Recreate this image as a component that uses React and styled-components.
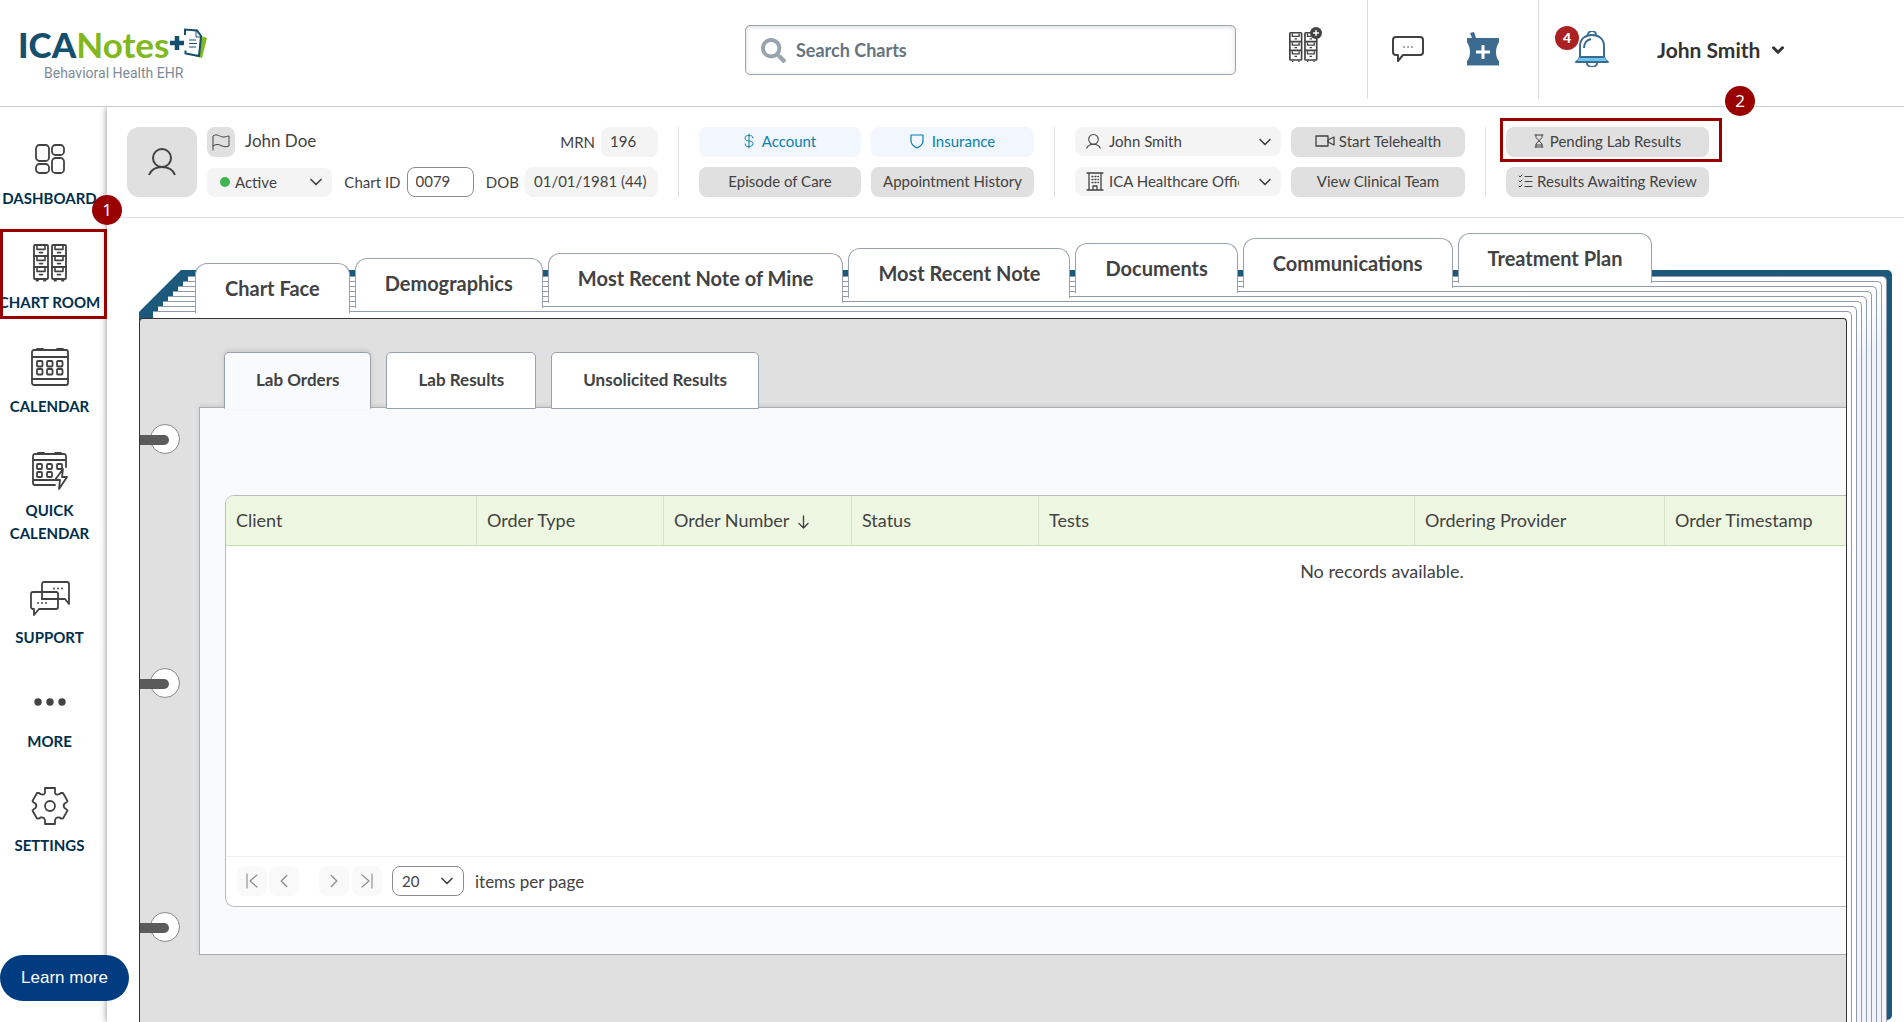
import * as React from 'react';
import styled, { createGlobalStyle } from 'styled-components';
import { FaSearch } from 'react-icons/fa';
import { ChevronDown, ChevronLeft, ChevronRight } from 'lucide-react';

const GlobalStyle = createGlobalStyle`
    * {
        box-sizing: border-box;
    }
    body {
        margin: 0;
        background: #fff;
        color: #424242;
        font-family: Lato, "Open Sans", sans-serif;
        font-size: 15px;
    }
    button, input, select {
        margin: 0;
        color: inherit;
        font-family: inherit;
        font-size: 15px;
    }
`;

/* ---------- icons ---------- */

const Line = ({ w, h, stroke = 2, children }) => (
    <svg width={w} height={h} viewBox={`0 0 ${w} ${h}`} fill="none" stroke="currentColor"
        strokeWidth={stroke} strokeLinejoin="round" strokeLinecap="round" aria-hidden="true">
        {children}
    </svg>
);

const cabinet = (x) => (
    <g key={x}>
        <rect x={x} y="1" width="14" height="34" rx="1" />
        <path d={`M${x} 12h14M${x} 23h14`} />
        {[1, 12, 23].map((y) => (
            <path key={y} strokeWidth="1.6" d={`M${x + 3} ${y + 1}v3.4h8v-3.4M${x + 5.5} ${y + 7.6}h3`} />
        ))}
        <path d={`M${x + 2.5} 36.5h1.5M${x + 10} 36.5h1.5`} />
    </g>
);

const CabinetIcon = () => <Line w={34} h={38} stroke={1.8}>{[1, 19].map(cabinet)}</Line>;

const AddChartIcon = () => (
    <svg width="34" height="36" viewBox="0 0 34 36" fill="none" stroke="currentColor" strokeWidth="2" aria-hidden="true">
        <g transform="translate(0 5) scale(.84 .8)">{[1, 19].map(cabinet)}</g>
        <circle cx="27" cy="6" r="6" fill="#424242" stroke="none" />
        <path d="M27 3v6M24 6h6" stroke="#fff" strokeWidth="1.4" />
    </svg>
);

const DashboardIcon = () => (
    <Line w={30} h={30} stroke={1.8}>
        <rect x="1" y="1" width="13" height="16" rx="3.5" />
        <rect x="17" y="1" width="12" height="10" rx="3.5" />
        <rect x="1" y="20" width="13" height="9" rx="3.5" />
        <rect x="17" y="14" width="12" height="15" rx="3.5" />
    </Line>
);

const days = [[6, 13], [16, 13], [26, 13], [6, 21], [16, 21], [26, 21]];

const CalendarIcon = () => (
    <Line w={38} h={38} stroke={1.8}>
        <rect x="1" y="2" width="36" height="35" rx="2" />
        <path d="M1 9h36M1 31h36M6 1h6M26 1h6" />
        {days.map(([x, y]) => <rect key={`${x}-${y}`} x={x} y={y} width="5.5" height="5.5" rx="1" />)}
    </Line>
);

const QuickCalendarIcon = () => (
    <Line w={36} h={38} stroke={1.8}>
        <path d="M34 15V4a2 2 0 0 0-2-2H3a2 2 0 0 0-2 2v27a2 2 0 0 0 2 2h20M1 8h33M1 28h21M6 1h6M23 1h6" />
        {days.slice(0, 5).map(([x, y]) => (
            <rect key={`${x}-${y}`} x={x - 1} y={y - 1} width="5" height="5" rx="1" />
        ))}
        <path d="M31 17l-8 11h5l-1 9 8-12h-5z" fill="#fff" />
    </Line>
);

const SupportIcon = () => (
    <Line w={40} h={36} stroke={1.8}>
        <path d="M12 12V4a2 2 0 0 1 2-2h23a2 2 0 0 1 2 2v20l-4-5h-6M12 12v7" />
        <path d="M3 12h23a2 2 0 0 1 2 2v13a2 2 0 0 1-2 2H9l-5 6v-6H3a2 2 0 0 1-2-2V14a2 2 0 0 1 2-2zM12 19h16" />
        <path d="M24 8.500h.1M28 8.500h.1M32 8.500h.1M8 23h.1M12 23h.1M16 23h.1" />
    </Line>
);

const MoreIcon = () => (
    <svg width="32" height="8" viewBox="0 0 32 8" fill="currentColor" aria-hidden="true">
        <circle cx="4" cy="4" r="3.700" /><circle cx="16" cy="4" r="3.700" /><circle cx="28" cy="4" r="3.700" />
    </svg>
);

const SettingsIcon = () => (
    <Line w={38} h={38} stroke={1.8}>
        <path d="M14 1h10v4q0 3 3 2.500q2-.5 3-1.500l2 0 4.500 8q-.5 1.500-2.500 2.200-2.500 2-.5 4.800 2 1 3 2.500l-4.500 8q-2 .5-4-1.200-4-.3-4 3.700v3H14v-3q0-4-4-3.700-2 1.700-4 1.200l-4.500-8q1-1.500 3-2.500 2-2.800-.5-4.800-2-.7-2.500-2.200L6 6h2q1 1 3 1.500 3 .5 3-2.500z" />
        <circle cx="19" cy="19" r="5" />
    </Line>
);

const ChatIcon = () => (
    <Line w={32} h={26}>
        <path d="M4 1h24a3 3 0 0 1 3 3v12a3 3 0 0 1-3 3H11l-5 6v-6H4a3 3 0 0 1-3-3V4a3 3 0 0 1 3-3z" />
        <path d="M12 11h.1M16 11h.1M20 11h.1" strokeWidth="1.500" />
    </Line>
);

const PharmacyIcon = () => (
    <svg width="32" height="34" viewBox="0 0 32 34" aria-hidden="true">
        <path fill="#3d6a8f" d="M3 1l4-1 2 6h23v4c-1 2-3 5-3 10s2 8 3 9v5H0v-5c1-1 3-4 3-9S1 12 0 10V6h5z" />
        <path stroke="#fff" strokeWidth="3" d="M16 13v14M9 20h14" />
        <path stroke="#a7bccd" d="M0 33.500h32" />
    </svg>
);

const BellIcon = () => (
    <svg width="36" height="36" viewBox="0 0 36 36" fill="none" stroke="#3d6a8f" strokeWidth="2" strokeLinejoin="round" aria-hidden="true">
        <path d="M14 4a4 4 0 0 1 8 0M13 32a5 4 0 0 0 10 0" />
        <path d="M2 31c3-2 4-3 4-6V15C6 8 11 4 18 4s12 4 12 11v10c0 3 1 4 4 6z" fill="#fff" />
        <path d="M6 26h24l3 4H3z" fill="#6cc6f0" stroke="none" />
        <path d="M6 26h24M2 31h32M10 17c0-5 3-8 7-9" />
    </svg>
);

const PersonIcon = ({ size = 28 }) => (
    <svg width={size} height={size} viewBox="0 0 28 28" fill="none" stroke="currentColor" strokeWidth="2" aria-hidden="true">
        <circle cx="14" cy="10" r="9" /><path d="M1 27c2-5 7-8 13-8s11 3 13 8" />
    </svg>
);

const FlagIcon = () => (
    <Line w={18} h={18} stroke={1}>
        <path d="M1 17V3c4-3 7 1 10 1 3 .2 4-1 6-1v10c-3 1-5 1-8-.5S4 11 1 13" />
    </Line>
);

const DollarIcon = () => (
    <Line w={10} h={16} stroke={1}>
        <path d="M5 1v14M9 5c0-2-2-2.500-4-2.500S1 3 1 5.300C1 9 9 7 9 10.500 9 13 7 13.500 5 13.500S1 13 1 11" />
    </Line>
);

const ShieldIcon = () => (
    <Line w={14} h={16} stroke={1.2}><path d="M1 2c4 0 9 0 12 0v6c0 3-2 5-6 7-4-2-6-4-6-7z" /></Line>
);

const BuildingIcon = () => (
    <Line w={18} h={19} stroke={1.3}>
        <path d="M1 1h16M3 1v17M15 1v17M1 18h16M7 18v-4h4v4" />
        <path d="M6 4.500h1M9 4.500h1M12 4.500h.5M6 7.500h1M9 7.500h1M12 7.500h.5M6 10.500h1M9 10.500h1M12 10.500h.5" />
    </Line>
);

const CameraIcon = () => (
    <Line w={20} h={12} stroke={1.3}><rect x="1" y="1" width="12" height="10" /><path d="M13 5l6-3v8l-6-3z" /></Line>
);

const HourglassIcon = () => (
    <Line w={10} h={14} stroke={1}>
        <path d="M1 1h8M1 13h8M2 1v2.500L8 10v3M8 1v2.500L2 10v3M2 11h6" />
    </Line>
);

const ChecklistIcon = () => (
    <Line w={15} h={14} stroke={1}>
        <path d="M1 2l1 1 2-2M1 7l1 1 2-2M1 12l1 1 2-2M7 2.500h7M7 7.500h7M7 12.500h7" />
    </Line>
);

const EndIcon = ({ flip }) => (
    <Line w={12} h={16} stroke={1.200}>
        <path d={flip ? 'M1 2l7 6-7 6M11 1v14' : 'M11 2L4 8l7 6M1 1v14'} />
    </Line>
);

const SortIcon = () => (
    <Line w={11} h={14} stroke={1.400}><path d="M5.500 1v12M1 8.500l4.500 4.500L10 8.500" /></Line>
);

const NotesIcon = () => (
    <svg width="37" height="32" viewBox="0 0 37 32" aria-hidden="true">
        <path d="M31 8l6 2-5 20-15-4z" fill="#80b81d" />
        <path d="M15 2l12 1 4 5-2 20-14-3z" fill="#fff" />
        <path d="M15 7V1.500l12 1 4 5.500-2 20-13.500-2.500v-3" fill="none" stroke="#144f6d" strokeWidth="2" />
        <path d="M0 15h14M7 8v14" stroke="#144f6d" strokeWidth="4.500" />
        <path d="M26 2v7h5M19 12h7M19 15.500h8M19 19h7" stroke="#144f6d" fill="none" />
    </svg>
);

/* ---------- header ---------- */

const Page = styled.div`
    display: flex;
    flex-direction: column;
    height: 100vh;
    overflow: hidden;
`;
const Header = styled.header`
    position: relative;
    z-index: 1;
    display: grid;
    grid-template-columns: 745fr 491fr 668fr;
    flex: none;
    height: 107px;
    background: #fff;
    border-bottom: 1px solid #ccc;
`;
const Logo = styled.a`
    display: flex;
    flex-direction: column;
    align-self: start;
    width: 189px;
    margin: 24px 0 0 18px;
    text-decoration: none;
`;
const LogoName = styled.span`
    display: flex;
    align-items: center;
    justify-content: space-between;
    height: 40px;
    color: #80b81d;
    font-size: 35px;
    font-weight: 700;
    line-height: 40px;
    b {
        color: #144f6d;
    }
`;
const Tagline = styled.span`
    padding-left: 26px;
    color: #7d8c93;
    font-family: Roboto, sans-serif;
    font-size: 14px;
    line-height: 18px;
    white-space: nowrap;
`;
const SearchBox = styled.label`
    display: flex;
    align-items: center;
    gap: 8px;
    height: 50px;
    margin-top: 25px;
    padding: 0 15px;
    color: #98a4b0;
    border: 1px solid #98a4b0;
    border-radius: 5px;
    box-shadow: inset 0 1px 4px rgba(0, 0, 0, 0.16);
    input {
        flex: 1;
        min-width: 0;
        font-size: 18px;
        font-weight: 700;
        background: none;
        border: 0;
        outline: 0;
    }
    input::placeholder {
        color: #66747f;
        opacity: 1;
    }
`;
const HeaderTools = styled.div`
    display: flex;
    align-items: flex-start;
`;
const ToolGroup = styled.div`
    display: flex;
    align-items: center;
    gap: ${(p) => p.$gap || 0}px;
    flex: ${(p) => (p.$width ? `0 0 ${p.$width}px` : '1')};
    height: 99px;
    padding: 0 0 ${(p) => p.$lift || 0}px ${(p) => p.$left}px;
    border-left: ${(p) => (p.$line ? '1px solid #dcdcdc' : '0')};
`;
const IconButton = styled.button`
    position: relative;
    display: flex;
    padding: 0;
    background: none;
    border: 0;
`;
const Count = styled.span`
    position: absolute;
    top: -5px;
    left: -19px;
    width: 24px;
    height: 24px;
    color: #fff;
    font-size: 14px;
    font-weight: 900;
    line-height: 24px;
    text-align: center;
    background: #ab2020;
    border-radius: 50%;
`;
const UserMenu = styled.button`
    display: flex;
    align-items: center;
    gap: 9px;
    margin-left: 47px;
    padding: 2px 0 0;
    color: #333;
    font-size: 21px;
    font-weight: 700;
    background: none;
    border: 0;
`;

/* ---------- side navigation ---------- */

const Body = styled.div`
    display: flex;
    flex: 1;
    min-height: 0;
`;
const SideNav = styled.nav`
    display: flex;
    flex-direction: column;
    flex: none;
    gap: 33px;
    width: 107px;
    padding: 32px 8px 0 0;
`;
const NavItem = styled.a`
    position: relative;
    display: flex;
    flex-direction: column;
    align-items: center;
    gap: 8px;
    color: #424242;
    text-decoration: none;
`;
const NavIcon = styled.span`
    display: flex;
    align-items: center;
    height: 40px;
`;
const NavLabel = styled.span`
    color: #002f4b;
    font-size: 15px;
    font-weight: 700;
    line-height: 23px;
    text-align: center;
    white-space: pre;
`;
const Marker = styled.span`
    position: absolute;
    z-index: 2;
    width: 30px;
    height: 30px;
    color: #fff;
    font-family: "Noto Sans", sans-serif;
    font-size: 17px;
    line-height: 30px;
    text-align: center;
    background: #900;
    border-radius: 50%;
`;
const NavFrame = styled.span`
    position: absolute;
    z-index: 1;
    top: -14px;
    right: -8px;
    bottom: -5px;
    left: 0;
    border: 3px solid #900;
    ${Marker} {
        top: -37px;
        right: -18px;
    }
`;
const LearnMore = styled.button`
    position: fixed;
    z-index: 3;
    bottom: 21px;
    left: 0;
    width: 129px;
    height: 46px;
    color: #fff;
    font-family: "Liberation Sans", Arial, sans-serif;
    font-size: 17px;
    background: #003c7f;
    border: 0;
    border-radius: 23px;
`;

/* ---------- patient bar ---------- */

const Main = styled.main`
    position: relative;
    display: flex;
    flex: 1;
    flex-direction: column;
    min-width: 0;
    background: #fff;
    box-shadow: 0 0 7px rgba(0, 0, 0, 0.45);
`;
const PatientBar = styled.section`
    display: flex;
    flex: none;
    gap: 10px;
    padding: 20px;
    border-bottom: 1px solid #e2e2e2;
`;
const Avatar = styled.div`
    display: grid;
    place-items: center;
    flex: 0 0 70px;
    height: 70px;
    background: #e0e0e0;
    border-radius: 12px;
`;
const Identity = styled.div`
    display: flex;
    flex: 0 0 451px;
    flex-direction: column;
    gap: 10px;
`;
const Row = styled.div`
    display: flex;
    align-items: center;
    justify-content: space-between;
    height: 30px;
`;
const Pair = styled.label`
    display: flex;
    align-items: center;
    gap: 6px;
`;
const Name = styled.div`
    display: flex;
    align-items: center;
    gap: 10px;
    font-size: 17px;
    span {
        padding-bottom: 3px;
    }
`;
const FlagButton = styled.button`
    display: grid;
    place-items: center;
    width: 28px;
    height: 30px;
    padding: 0;
    background: #e0e0e0;
    border: 0;
    border-radius: 8px;
`;
const Field = styled.input`
    width: ${(p) => p.$width}px;
    height: 30px;
    padding: 0 8px 2px;
    background: ${(p) => (p.$outlined ? '#fff' : '#f4f4f4')};
    border: 1px solid ${(p) => (p.$outlined ? '#8c8c8c' : '#f4f4f4')};
    border-radius: 8px;
`;
const Picker = styled.label`
    display: flex;
    align-items: center;
    position: relative;
    width: ${(p) => p.$width}px;
    height: ${(p) => (p.$outlined ? 30 : 29)}px;
    background: ${(p) => (p.$outlined ? '#fff' : '#f4f4f4')};
    border: ${(p) => (p.$outlined ? '1px solid #8c8c8c' : '0')};
    border-radius: 8px;
    select {
        width: 100%;
        height: 100%;
        padding: 0 ${(p) => p.$cut || 30}px 1px ${(p) => p.$left}px;
        background: none;
        border: 0;
        outline: 0;
        appearance: none;
    }
    > :first-child:not(select) {
        position: absolute;
        left: 11px;
    }
    > :last-child {
        position: absolute;
        right: 6px;
        pointer-events: none;
    }
`;
const Dot = styled.i`
    width: 10px;
    height: 10px;
    margin-left: 2px;
    background: #3fb54f;
    border-radius: 50%;
`;
const Divider = styled.div`
    width: 1px;
    margin: 0 10px;
    background: #e0e0e0;
`;
const ActionGrid = styled.div`
    display: grid;
    grid-template-columns: ${(p) => p.$columns};
    grid-auto-rows: 30px;
    gap: 10px;
`;
const Action = styled.button`
    display: flex;
    align-items: center;
    justify-content: center;
    gap: ${(p) => p.$gap || 8}px;
    padding: 0 0 2px;
    color: ${(p) => (p.$blue ? '#0a80ae' : '#424242')};
    white-space: nowrap;
    background: ${(p) => (p.$blue ? '#f1f7fc' : '#e0e0e0')};
    border: 0;
    border-radius: 8px;
`;
const Framed = styled.div`
    position: relative;
    display: grid;
`;
const ActionFrame = styled.span`
    position: absolute;
    z-index: 2;
    top: -9px;
    right: -13px;
    bottom: -5px;
    left: -6px;
    border: 3px solid #900;
    pointer-events: none;
    ${Marker} {
        top: -35px;
        right: -36px;
    }
`;

/* ---------- chart binder ---------- */

const Binder = styled.section`
    display: grid;
    grid-template-rows: minmax(0, 1fr);
    grid-template-columns: minmax(0, 1fr);
    flex: 1;
    isolation: isolate;
    min-height: 0;
    margin: 15px 12px 0 32px;
    > * {
        grid-area: 1 / 1;
    }
`;
const Cover = styled.div`
    z-index: -1;
    margin: 37px 0 2px;
    background: #1b587c;
    border-radius: 0 5px 5px 0;
    clip-path: polygon(42px 0, 100% 0, 100% 100%, 0 100%, 0 42px);
`;
const Sheet = styled.div`
    margin: ${(p) => 43 + p.$n * 5}px ${(p) => 5 + p.$n * 5}px 0 ${(p) => 49 - p.$n * 5}px;
    background: linear-gradient(#fff, ${(p) => (p.$n < 6 ? '#f0f4fa' : '#fff')} 60px);
    border: 1px solid #8f9bab;
    border-width: 1px 1px 0 0;
    border-radius: 0 5px 0 0;
`;
const ChartTabs = styled.div`
    display: flex;
    align-self: start;
    gap: 5px;
    margin-left: 56px;
`;
const ChartTab = styled.button`
    height: 50px;
    margin-top: ${(p) => p.$drop}px;
    padding: 0 29px 1px;
    font-size: 20px;
    font-weight: 700;
    white-space: nowrap;
    background: #fff;
    border: 1px solid #98a2ae;
    border-bottom: 0;
    border-radius: 12px 12px 0 0;
`;
const Folder = styled.div`
    display: flex;
    margin: 85px 45px 0 0;
    overflow: hidden;
    background: #e0e0e0;
    border: 1px solid #333;
    border-bottom: 0;
    border-radius: 4px 4px 0 0;
`;
const Rings = styled.div`
    display: flex;
    flex-direction: column;
    flex: 0 0 59px;
    gap: 214px;
    padding: 105px 0 0 10px;
`;
const Ring = styled.span`
    position: relative;
    width: 30px;
    height: 30px;
    background: #fff;
    border: 1px solid #888;
    border-radius: 50%;
    &::before {
        content: "";
        position: absolute;
        top: 10px;
        left: -11px;
        width: 29px;
        height: 10px;
        background: #5b5b5b;
        border-radius: 0 5px 5px 0;
    }
`;
const Labs = styled.div`
    flex: 1;
    min-width: 0;
    padding-top: 33px;
`;
const LabTabs = styled.div`
    position: relative;
    display: flex;
    gap: 15px;
    margin-left: 25px;
`;
const LabTab = styled.button`
    height: 57px;
    padding: 0 31px 2px;
    font-size: 17px;
    font-weight: 700;
    background: ${(p) => (p.$active ? '#f9fafc' : '#fff')};
    border: 1px solid #98a2ae;
    border-bottom-color: ${(p) => (p.$active ? '#f9fafc' : '#98a2ae')};
    border-radius: 5px 5px 0 0;
    box-shadow: ${(p) => (p.$active ? '0 -2px 4px rgba(0, 0, 0, 0.1)' : 'none')};
`;
const LabPanel = styled.div`
    margin-top: -2px;
    padding: 87px 0 47px 25px;
    background: #f9fafc;
    border: 1px solid #adadad;
    border-right: 0;
    box-shadow: 0 -2px 4px rgba(0, 0, 0, 0.08);
`;
const Grid = styled.div`
    overflow: hidden;
    background: #fff;
    border: 1px solid #bdbdbd;
    border-right: 0;
    border-radius: 9px 0 0 9px;
`;
const Table = styled.table`
    width: 2312px;
    height: 360px;
    font-size: 18px;
    table-layout: fixed;
    border-collapse: separate;
    border-spacing: 0;
    th {
        height: 50px;
        padding: 0 10px 2px;
        font-weight: 400;
        text-align: left;
        background: #eef7e2;
        border-bottom: 1px solid #c9dfb0;
    }
    th + th {
        border-left: 1px solid #d5e2c8;
    }
    td {
        padding: 14px 0 0;
        text-align: center;
        vertical-align: top;
    }
    svg {
        margin-left: 9px;
        vertical-align: -2px;
    }
`;
const Pager = styled.div`
    display: flex;
    align-items: center;
    height: 50px;
    padding: 0 0 1px 11px;
    border-top: 1px solid #f0f0f0;
    font-size: 17px;
`;
const PageButton = styled.button`
    display: grid;
    place-items: center;
    width: 30px;
    height: 30px;
    margin-right: ${(p) => p.$after}px;
    padding: 0;
    color: #909090;
    background: #f9f9f9;
    border: 0;
    border-radius: 8px;
`;
const PageSize = styled.div`
    display: flex;
    align-items: center;
    gap: 11px;
`;

const navItems = [
    { label: 'DASHBOARD', icon: <DashboardIcon /> },
    { label: 'CHART ROOM', icon: <CabinetIcon />, marker: 1 },
    { label: 'CALENDAR', icon: <CalendarIcon /> },
    { label: 'QUICK\nCALENDAR', icon: <QuickCalendarIcon /> },
    { label: 'SUPPORT', icon: <SupportIcon /> },
    { label: 'MORE', icon: <MoreIcon /> },
    { label: 'SETTINGS', icon: <SettingsIcon /> },
];

const chartTabs = [
    'Chart Face',
    'Demographics',
    'Most Recent Note of Mine',
    'Most Recent Note',
    'Documents',
    'Communications',
    'Treatment Plan',
];

const columns = [
    { title: 'Client', width: 250 },
    { title: 'Order Type', width: 187 },
    { title: 'Order Number', width: 188, sorted: true },
    { title: 'Status', width: 187 },
    { title: 'Tests', width: 376 },
    { title: 'Ordering Provider', width: 250 },
    { title: 'Order Timestamp', width: 874 },
];

const Arrow = () => <ChevronDown size={20} strokeWidth={2} />;

export default function App() {
    const [labTab, setLabTab] = React.useState('Lab Orders');

    return (
        <Page>
            <GlobalStyle />
            <Header>
                <Logo href="#">
                    <LogoName><span><b>ICA</b>Notes</span><NotesIcon /></LogoName>
                    <Tagline>Behavioral Health EHR</Tagline>
                </Logo>
                <SearchBox>
                    <FaSearch size={25} />
                    <input type="search" placeholder="Search Charts" aria-label="Search Charts" />
                </SearchBox>
                <HeaderTools>
                    <ToolGroup $width={131} $left={53} $lift={10}>
                        <IconButton aria-label="Add chart"><AddChartIcon /></IconButton>
                    </ToolGroup>
                    <ToolGroup $width={171} $left={24} $gap={43} $lift={1} $line>
                        <IconButton aria-label="Messages"><ChatIcon /></IconButton>
                        <IconButton aria-label="Pharmacy"><PharmacyIcon /></IconButton>
                    </ToolGroup>
                    <ToolGroup $left={35} $lift={2} $line>
                        <IconButton aria-label="Notifications"><BellIcon /><Count>4</Count></IconButton>
                        <UserMenu>John Smith <ChevronDown size={18} strokeWidth={4} /></UserMenu>
                    </ToolGroup>
                </HeaderTools>
            </Header>

            <Body>
                <SideNav>
                    {navItems.map((item) => (
                        <NavItem key={item.label} href="#">
                            <NavIcon>{item.icon}</NavIcon>
                            <NavLabel>{item.label}</NavLabel>
                            {item.marker && <NavFrame><Marker>{item.marker}</Marker></NavFrame>}
                        </NavItem>
                    ))}
                </SideNav>

                <Main>
                    <PatientBar>
                        <Avatar><PersonIcon /></Avatar>
                        <Identity>
                            <Row>
                                <Name><FlagButton aria-label="Flag"><FlagIcon /></FlagButton><span>John Doe</span></Name>
                                <Pair>MRN <Field $width={57} defaultValue="196" readOnly /></Pair>
                            </Row>
                            <Row>
                                <Picker $width={125} $left={28}>
                                    <Dot />
                                    <select aria-label="Status"><option>Active</option></select>
                                    <Arrow />
                                </Picker>
                                <Pair>Chart ID <Field $width={67} $outlined defaultValue="0079" /></Pair>
                                <Pair>DOB <Field $width={133} defaultValue="01/01/1981 (44)" readOnly /></Pair>
                            </Row>
                        </Identity>
                        <Divider />
                        <ActionGrid $columns="162px 163px">
                            <Action $blue><DollarIcon /> Account</Action>
                            <Action $blue><ShieldIcon /> Insurance</Action>
                            <Action>Episode of Care</Action>
                            <Action>Appointment History</Action>
                        </ActionGrid>
                        <Divider />
                        <ActionGrid $columns="206px 174px">
                            <Picker $width={206} $left={34}>
                                <PersonIcon size={15} />
                                <select aria-label="Provider"><option>John Smith</option></select>
                                <Arrow />
                            </Picker>
                            <Action $gap={4}><CameraIcon /> Start Telehealth</Action>
                            <Picker $width={206} $left={34} $cut={42}>
                                <BuildingIcon />
                                <select aria-label="Office"><option>ICA Healthcare Office</option></select>
                                <Arrow />
                            </Picker>
                            <Action>View Clinical Team</Action>
                        </ActionGrid>
                        <Divider />
                        <ActionGrid $columns="203px">
                            <Framed>
                                <Action $gap={6}><HourglassIcon /> Pending Lab Results</Action>
                                <ActionFrame><Marker>2</Marker></ActionFrame>
                            </Framed>
                            <Action $gap={4}><ChecklistIcon /> Results Awaiting Review</Action>
                        </ActionGrid>
                    </PatientBar>

                    <Binder>
                        <Cover />
                        {[0, 1, 2, 3, 4, 5, 6, 7].map((n) => <Sheet key={n} $n={n} />)}
                        <ChartTabs>
                            {chartTabs.map((tab, i) => (
                                <ChartTab key={tab} $drop={(chartTabs.length - 1 - i) * 5}>{tab}</ChartTab>
                            ))}
                        </ChartTabs>
                        <Folder>
                            <Rings><Ring /><Ring /><Ring /></Rings>
                            <Labs>
                                <LabTabs>
                                    {['Lab Orders', 'Lab Results', 'Unsolicited Results'].map((tab) => (
                                        <LabTab key={tab} $active={tab === labTab} onClick={() => setLabTab(tab)}>
                                            {tab}
                                        </LabTab>
                                    ))}
                                </LabTabs>
                                <LabPanel>
                                    <Grid>
                                        <Table>
                                            <colgroup>
                                                {columns.map((c) => <col key={c.title} width={c.width} />)}
                                            </colgroup>
                                            <thead>
                                                <tr>
                                                    {columns.map((c) => (
                                                        <th key={c.title}>{c.title}{c.sorted && <SortIcon />}</th>
                                                    ))}
                                                </tr>
                                            </thead>
                                            <tbody>
                                                <tr><td colSpan={columns.length}>No records available.</td></tr>
                                            </tbody>
                                        </Table>
                                        <Pager>
                                            <PageButton $after={2} aria-label="First page"><EndIcon /></PageButton>
                                            <PageButton $after={20} aria-label="Previous page"><ChevronLeft size={22} strokeWidth={1.5} /></PageButton>
                                            <PageButton $after={3} aria-label="Next page"><ChevronRight size={22} strokeWidth={1.5} /></PageButton>
                                            <PageButton $after={10} aria-label="Last page"><EndIcon flip /></PageButton>
                                            <PageSize>
                                                <Picker $width={72} $left={9} $outlined>
                                                    <select aria-label="Items per page"><option>20</option></select>
                                                    <Arrow />
                                                </Picker>
                                                items per page
                                            </PageSize>
                                        </Pager>
                                    </Grid>
                                </LabPanel>
                            </Labs>
                        </Folder>
                    </Binder>
                </Main>
            </Body>
            <LearnMore>Learn more</LearnMore>
        </Page>
    );
}
